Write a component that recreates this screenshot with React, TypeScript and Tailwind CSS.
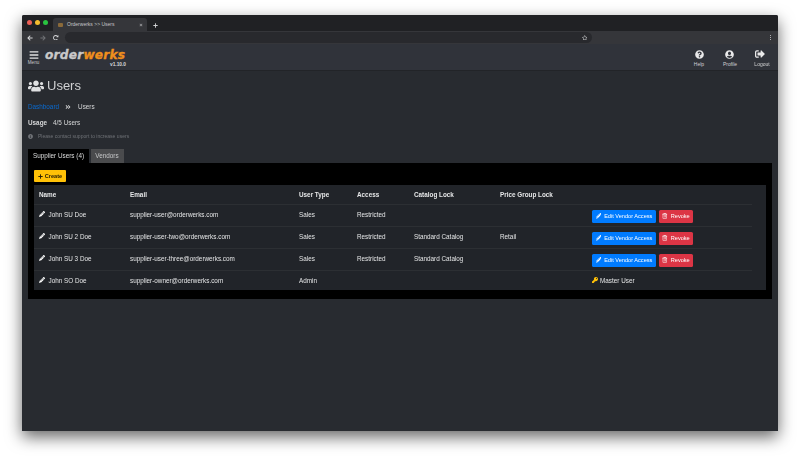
import React from "react";
import {
  FaAngleDoubleRight,
  FaArrowLeft,
  FaArrowRight,
  FaBars,
  FaInfoCircle,
  FaKey,
  FaPencilAlt,
  FaPlus,
  FaQuestionCircle,
  FaRedoAlt,
  FaRegStar,
  FaRegTrashAlt,
  FaSignOutAlt,
  FaTimes,
  FaUserCircle,
  FaUsers,
} from "react-icons/fa";

const users = [
  { name: "John SU Doe", email: "supplier-user@orderwerks.com", type: "Sales", access: "Restricted", catalog: "", price: "" },
  { name: "John SU 2 Doe", email: "supplier-user-two@orderwerks.com", type: "Sales", access: "Restricted", catalog: "Standard Catalog", price: "Retail" },
  { name: "John SU 3 Doe", email: "supplier-user-three@orderwerks.com", type: "Sales", access: "Restricted", catalog: "Standard Catalog", price: "" },
  { name: "John SO Doe", email: "supplier-owner@orderwerks.com", type: "Admin", access: "", catalog: "", price: "", owner: true },
];

function NavAction({ icon, label, className }: { icon: React.ReactNode; label: string; className: string }) {
  return (
    <div className={`flex flex-col items-center ${className}`}>
      {icon}
      <span className="mt-[2px] text-[5px] leading-[6px] text-[#d0d1d2]">{label}</span>
    </div>
  );
}

function Row({ user }: { user: (typeof users)[number] }) {
  return (
    <div className={`flex items-center border-t border-[#2c2f33] text-[6.35px] text-[#e4e5e6] ${user.owner ? "h-[20px]" : "h-[22px] [&>.cell]:pb-[2px]"}`}>
      <div className="cell flex w-[96px] items-center gap-[3px] pl-[5px]">
        <FaPencilAlt className="size-[6px] text-white" />
        <span className="ml-[0.5px]">{user.name}</span>
      </div>
      <div className="cell w-[169px]">{user.email}</div>
      <div className="cell w-[58px]">{user.type}</div>
      <div className="cell w-[57px]">{user.access}</div>
      <div className="cell w-[86px]">{user.catalog}</div>
      <div className="cell w-[92px]">{user.price}</div>
      {user.owner ? (
        <div className="flex items-center gap-[2px]">
          <FaKey className="size-[6px] text-[#ffc107]" />
          <span>Master User</span>
        </div>
      ) : (
        <div className="mt-[1px] flex items-center gap-[3px]">
          <div className="flex h-[13px] w-[64px] items-center justify-center gap-[3px] rounded-[1.5px] bg-[#007bff] text-[5.6px] text-white">
            <FaPencilAlt className="size-[5.5px]" />
            Edit Vendor Access
          </div>
          <div className="flex h-[13px] w-[34px] items-center justify-center gap-[3px] rounded-[1.5px] bg-[#dc3545] text-[5.6px] text-white">
            <FaRegTrashAlt className="size-[5.5px]" />
            Revoke
          </div>
        </div>
      )}
    </div>
  );
}

export default function App() {
  return (
    <div className="h-[460px] w-[800px] overflow-hidden bg-white pl-[22px] pt-[15px] font-['Liberation_Sans',sans-serif]">
      <div className="flex h-[416px] w-[756px] flex-col overflow-hidden rounded-t-[2px] bg-[#282b30] shadow-[0_6px_16px_rgba(0,0,0,0.6)]">
        <div className="flex h-full flex-col blur-[0.3px]">
          {/* browser tabs */}
          <div className="flex h-[16px] shrink-0 items-end bg-[#202124] pl-[5px]">
            <div className="mb-[6px] mr-[9px] flex gap-[3px]">
              <span className="size-[5px] rounded-full bg-[#ed5f56]" />
              <span className="size-[5px] rounded-full bg-[#f5bd2f]" />
              <span className="size-[5px] rounded-full bg-[#29c440]" />
            </div>
            <div className="-ml-[4px] flex h-[13px] w-[94px] items-center rounded-t-[3px] bg-[#35363a] pl-[5px] pr-[4px]">
              <span className="mr-[4px] h-[4px] w-[5px] rounded-[1px] bg-[#8a6a3a]" />
              <span className="text-[5px] text-[#c6c7c9]">Orderwerks &gt;&gt; Users</span>
              <FaTimes className="ml-auto size-[4px] text-[#9a9b9e]" />
            </div>
            <FaPlus className="mb-[3.5px] ml-[6px] size-[5px] text-[#d0d1d3]" />
          </div>
          {/* browser toolbar */}
          <div className="flex h-[13px] shrink-0 items-center bg-[#35363a] pl-[5px] pr-[7px]">
            <FaArrowLeft className="size-[6px] text-[#d5d6d8]" />
            <FaArrowRight className="ml-[7px] size-[6px] text-[#707276]" />
            <FaRedoAlt className="ml-[7px] size-[5.5px] text-[#d5d6d8]" />
            <div className="ml-[6.5px] flex h-[11px] w-[527px] items-center justify-end rounded-full bg-[#28292d] pr-[5px]">
              <FaRegStar className="size-[5.5px] text-[#c4c5c7]" />
            </div>
            <div className="ml-auto flex flex-col gap-[1px]">
              <span className="size-[1.3px] rounded-full bg-[#d5d6d8]" />
              <span className="size-[1.3px] rounded-full bg-[#d5d6d8]" />
              <span className="size-[1.3px] rounded-full bg-[#d5d6d8]" />
            </div>
          </div>
          {/* app navbar */}
          <div className="flex h-[27px] shrink-0 items-center border-b border-[#222428] bg-[#30333a] pl-[6px]">
            <div className="flex w-[11px] flex-col items-center">
              <FaBars className="size-[10px] text-[#e2e3e4]" />
              <span className="text-[4.6px] leading-[5px] text-[#c8c9ca]">Menu</span>
            </div>
            <div className="ml-[6px] mt-[2px] flex w-[81px] flex-col items-end">
              <div className="w-full whitespace-nowrap font-['DejaVu_Sans',sans-serif] text-[12.2px] font-bold italic leading-[11px] tracking-[0.2px] [-webkit-text-stroke:0.35px]">
                <span className="text-[#c9c9c9]">order</span>
                <span className="text-[#ef8f1d]">werks</span>
              </div>
              <span className="mt-[1px] text-[4.8px] font-bold leading-[5px] text-[#d8d9da]">v1.10.0</span>
            </div>
            <div className="ml-auto mt-[2px] flex items-center pr-[9px]">
              <NavAction icon={<FaQuestionCircle className="size-[9px] text-[#e9e9ea]" />} label="Help" className="w-[10px]" />
              <NavAction icon={<FaUserCircle className="-ml-[2px] size-[9px] text-[#e9e9ea]" />} label="Profile" className="ml-[20px] w-[12px]" />
              <NavAction icon={<FaSignOutAlt className="-ml-[4px] size-[10px] text-[#e9e9ea]" />} label="Logout" className="ml-[19px] w-[14px]" />
            </div>
          </div>
          {/* page */}
          <div className="px-[6px]">
            <div className="mt-[6px] flex h-[17px] items-center gap-[3px]">
              <FaUsers className="size-[16px] text-[#dfe0e1]" />
              <span className="text-[13px] text-[#cfd0d2]">Users</span>
            </div>
            <div className="mt-[9px] flex items-center text-[6.35px] leading-[8px] text-[#d6d7d8]">
              <span className="text-[#0a6bd1]">Dashboard</span>
              <FaAngleDoubleRight className="ml-[6px] size-[6px]" />
              <span className="ml-[7px]">Users</span>
            </div>
            <div className="mt-[8px] flex text-[6.35px] leading-[8px] text-[#d6d7d8]">
              <span className="font-bold">Usage</span>
              <span className="ml-[6px]">4/5 Users</span>
            </div>
            <div className="mt-[6px] flex items-center text-[5.05px] leading-[7px] text-[#6f7277]">
              <FaInfoCircle className="size-[5px]" />
              <span className="ml-[5px]">Please contact support to increase users</span>
            </div>
            <div className="mt-[9px] flex h-[14px] items-stretch text-[6.35px]">
              <div className="flex w-[61px] items-center justify-center bg-black text-[#dcdddd]">Supplier Users (4)</div>
              <div className="ml-[1.5px] flex w-[33px] items-center justify-center bg-[#4a4b4d] text-[#c6c7c8]">Vendors</div>
            </div>
            <div className="h-[136px] bg-black px-[6px] pt-[7px]">
              <div className="flex h-[12px] w-[32px] items-center justify-center gap-[2px] rounded-[1px] bg-[#ffc107] text-[5.6px] font-bold text-[#2b2205]">
                <FaPlus className="size-[5px]" />
                Create
              </div>
              <div className="mt-[3px] h-[105px] bg-[#212429] pr-[14px]">
                <div className="flex h-[19px] items-center text-[6.35px] font-bold text-[#e6e7e8]">
                  <div className="w-[96px] pl-[5px]">Name</div>
                  <div className="w-[169px]">Email</div>
                  <div className="w-[58px]">User Type</div>
                  <div className="w-[57px]">Access</div>
                  <div className="w-[86px]">Catalog Lock</div>
                  <div>Price Group Lock</div>
                </div>
                {users.map((user) => (
                  <Row key={user.email} user={user} />
                ))}
              </div>
            </div>
          </div>
        </div>
      </div>
    </div>
  );
}
